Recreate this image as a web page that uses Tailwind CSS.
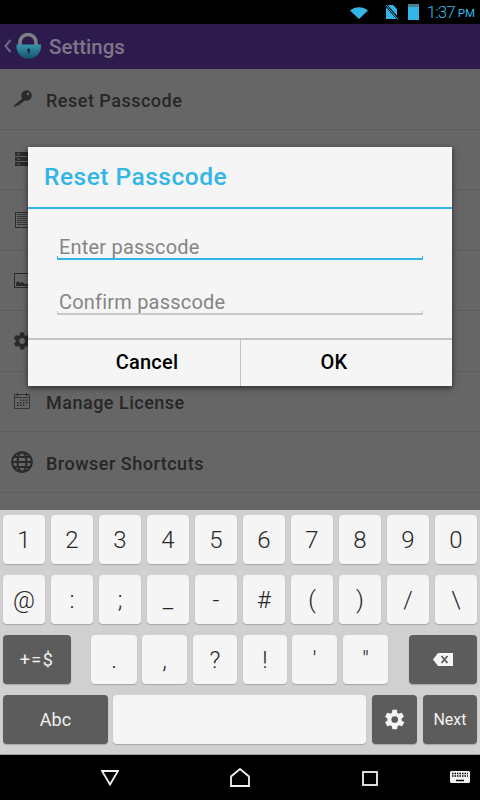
<!DOCTYPE html>
<html lang="en">
<head>
<meta charset="UTF-8">
<title>Reset Passcode</title>
<script src="https://cdn.jsdelivr.net/npm/@tailwindcss/browser@4"></script>
</head>
<body class="w-[480px] h-[800px] overflow-hidden bg-black font-['Roboto',sans-serif]">
<div class="flex flex-col h-[800px]">

  <!-- status bar -->
  <div class="h-[24px] bg-black flex items-center justify-end text-[#33b5e5]">
    <svg class="w-[18px] h-[12px] mr-[17px] mt-[1px]" viewBox="0 0 18 12"><path d="M0 3.500C5 -1 13 -1 18 3.500L9 12Z" fill="#33b5e5"/></svg>
    <svg class="w-[14px] h-[16px] mr-[9px]" viewBox="0 0 14 16"><path d="M1 1H8L12 5V15H1Z" fill="#33b5e5"/><path d="M0 0L14 16" stroke="#000" stroke-width="2.500"/><path d="M1 1L13 15.500" stroke="#33b5e5" stroke-width="1"/></svg>
    <svg class="w-[11px] h-[16px] mr-[8px]" viewBox="0 0 11 16"><rect x="0" y="0" width="11" height="3" fill="#4a7f96"/><rect x="0" y="3" width="11" height="13" fill="#33b5e5"/></svg>
    <span class="text-[17px] font-light leading-none mr-[3px] tracking-[-1px]">1:37</span>
    <span class="text-[11.500px] leading-none mr-[5px] mt-[3px]">PM</span>
  </div>

  <!-- app bar -->
  <div class="h-[45px] bg-[#2d1b4e] flex items-center">
    <svg class="w-[8px] h-[14px] ml-[4px] mt-[-2px]" viewBox="0 0 8 14"><path d="M6.500 1L1.500 7L6.500 13" fill="none" stroke="#6f6787" stroke-width="2"/></svg>
    <svg class="w-[26px] h-[26px] ml-[4px] mt-[-1px]" viewBox="0 0 26 26">
      <defs><linearGradient id="lock" x1="0" y1="0" x2="0" y2="1"><stop offset="0" stop-color="#3b93ad"/><stop offset="1" stop-color="#14566f"/></linearGradient></defs>
      <path d="M4 12V9.500a8 8 0 0 1 16 0V12" fill="none" stroke="#7d8186" stroke-width="3.500"/>
      <path d="M0.500 11.500H25V14a12.250 11.500 0 0 1-24.500 0Z" fill="url(#lock)"/>
      <circle cx="12.700" cy="17" r="1.500" fill="#10232c"/><rect x="12" y="17" width="1.400" height="3.500" fill="#10232c"/>
    </svg>
    <span class="ml-[7px] mt-[2px] text-[20.500px] font-medium text-[#7f7689]">Settings</span>
  </div>

  <!-- settings list, dimmed behind the dialog -->
  <div class="relative h-[441px] bg-[#666666]">
    <div class="flex items-center h-[60.500px] border-b border-[#5d5d5d]">
      <div class="w-[46px] flex justify-center pr-[2px]">
        <svg class="w-[19px] h-[17px]" viewBox="0 0 19 17"><circle cx="13.500" cy="5.500" r="5.200" fill="#2a2a2a"/><circle cx="15" cy="4" r="1.300" fill="#666"/><path d="M10 8L1 15.500L2 17L5 15L6 15.500L8 13L9 13L12 10Z" fill="#2a2a2a"/></svg>
      </div>
      <span class="mt-[3px] text-[18px] tracking-[0.5px] font-medium text-[#262626]">Reset Passcode</span>
    </div>
    <div class="flex items-center h-[60.500px] border-b border-[#5d5d5d]">
      <div class="w-[46px] flex justify-center pr-[2px]">
        <svg class="w-[15px] h-[14px]" viewBox="0 0 15 14"><path d="M0 0H15V4H0ZM0 5H15V9H0ZM0 10H15V14H0Z" fill="#2a2a2a"/><path d="M2 2H5M2 7H5M2 12H5" stroke="#666"/></svg>
      </div>
    </div>
    <div class="flex items-center h-[60.500px] border-b border-[#5d5d5d]">
      <div class="w-[46px] flex justify-center pr-[2px]">
        <svg class="w-[14px] h-[16px]" viewBox="0 0 14 16"><rect x="0.500" y="0.500" width="13" height="15" fill="none" stroke="#2a2a2a"/><path d="M2 2.500H12M2 4.500H12M2 6.500H12M2 8.500H12M2 10.500H12M2 12.500H12" stroke="#2a2a2a" stroke-width="0.800"/></svg>
      </div>
    </div>
    <div class="flex items-center h-[60.500px] border-b border-[#5d5d5d]">
      <div class="w-[46px] flex justify-center pr-[2px]">
        <svg class="w-[16px] h-[15px]" viewBox="0 0 16 15"><rect x="0.500" y="0.500" width="15" height="14" fill="none" stroke="#2a2a2a"/><path d="M2 13V10L4 8L6 10L8 9L11 11L14 11V13Z" fill="#2a2a2a"/></svg>
      </div>
    </div>
    <div class="flex items-center h-[60.500px] border-b border-[#5d5d5d]">
      <div class="w-[46px] flex justify-center pr-[2px]">
        <svg class="w-[20px] h-[20px]" viewBox="0 0 24 24"><path fill="#2a2a2a" d="M19.400 13c.040-.330.060-.660.060-1s-.020-.670-.060-1l2.150-1.680c.190-.150.240-.420.120-.640l-2.040-3.530c-.120-.220-.390-.300-.620-.220l-2.540 1.020c-.530-.400-1.100-.730-1.720-.990L14.770 2.260c-.040-.240-.250-.420-.500-.420h-4.080c-.250 0-.460.180-.500.420L9.310 4.960c-.620.260-1.190.600-1.720.990L5.050 4.930c-.230-.090-.500 0-.620.220L2.390 8.680c-.130.220-.070.490.120.640L4.660 11c-.040.330-.070.670-.070 1s.030.670.070 1l-2.150 1.680c-.190.150-.250.420-.120.640l2.040 3.530c.120.220.390.300.620.220l2.540-1.020c.530.400 1.100.730 1.720.990l.380 2.700c.040.240.250.420.500.420h4.080c.250 0 .460-.180.500-.420l.380-2.700c.620-.260 1.190-.600 1.720-.990l2.540 1.020c.230.090.500 0 .620-.220l2.040-3.530c.120-.220.070-.490-.120-.640ZM12.230 15.500a3.500 3.500 0 1 1 0-7 3.500 3.500 0 0 1 0 7Z"/></svg>
      </div>
    </div>
    <div class="flex items-center h-[60.500px] border-b border-[#5d5d5d]">
      <div class="w-[46px] flex justify-center pr-[2px]">
        <svg class="w-[16px] h-[16px]" viewBox="0 0 16 16"><path d="M.5 1.500H15.500V15.500H.5Z" fill="none" stroke="#2a2a2a" stroke-width="0.800"/><path d="M3.500 0V3M12.500 0V3" stroke="#2a2a2a" stroke-width="1.200"/><path d="M1 4.500H15" stroke="#2a2a2a" stroke-width="0.800"/><path d="M6 6.500H7.500V8H6ZM9 6.500H10.500V8H9ZM12 6.500H13.500V8H12ZM3 9H4.500V10.500H3ZM6 9H7.500V10.500H6ZM9 9H10.500V10.500H9ZM12 9H13.500V10.500H12ZM3 11.500H4.500V13H3ZM6 11.500H7.500V13H6ZM9 11.500H10.500V13H9Z" fill="#2a2a2a"/></svg>
      </div>
      <span class="mt-[3px] text-[18px] tracking-[0.5px] font-medium text-[#262626]">Manage License</span>
    </div>
    <div class="flex items-center h-[60.500px] border-b border-[#5d5d5d]">
      <div class="w-[46px] flex justify-center pr-[2px]">
        <svg class="w-[22px] h-[22px]" viewBox="0 0 22 22"><g fill="none" stroke="#2a2a2a" stroke-width="2"><circle cx="11" cy="11" r="9.800"/><ellipse cx="11" cy="11" rx="4.500" ry="9.800"/><path d="M1 11H21M2.500 6H19.500M2.500 16H19.500"/></g></svg>
      </div>
      <span class="mt-[3px] text-[18px] tracking-[0.5px] font-medium text-[#262626]">Browser Shortcuts</span>
    </div>

    <!-- dialog -->
    <div class="absolute left-[28px] top-[78px] w-[424px] h-[239px] bg-[#f5f5f5] flex flex-col shadow-[0_2px_6px_rgba(0,0,0,0.6)]">
      <div class="h-[62px] shrink-0 border-b-2 border-[#33b5e5] flex items-center pl-[16px] text-[24.500px] tracking-[0.5px] font-medium text-[#33b5e5]">Reset Passcode</div>
      <div class="flex-1 px-[29px] pt-[25px]">
        <div class="h-[22px] pl-[2px] text-[20px] leading-[26px] text-[#858585] tracking-[0.2px]">Enter passcode</div>
        <div class="h-[4px] border-x border-b-2 border-[#33b5e5]"></div>
        <div class="h-[22px] pl-[2px] mt-[29px] text-[20px] leading-[26px] text-[#858585] tracking-[0.2px]">Confirm passcode</div>
        <div class="h-[4px] border-x border-b-2 border-[#c8c8c8]"></div>
      </div>
      <div class="h-[48px] shrink-0 border-t-2 border-[#c4c4c4] flex text-[20px] tracking-[0.2px] font-medium text-black">
        <div class="flex-1 flex items-center justify-center pl-[26px] pb-[2px] border-r border-[#c4c4c4]">Cancel</div>
        <div class="flex-1 flex items-center justify-center pr-[25px] pb-[2px]">OK</div>
      </div>
    </div>
  </div>

  <!-- keyboard -->
  <div class="h-[244px] bg-[#d0d0d0] pt-[5px] px-[3px] flex flex-col gap-[11px] text-[#262626]">
    <div class="flex justify-between h-[49px] text-[24px] font-light">
      <div class="w-[42px] rounded-[4px] bg-[#f5f5f5] shadow-[0_1px_1px_#a5a5a5] flex items-center justify-center">1</div>
      <div class="w-[42px] rounded-[4px] bg-[#f5f5f5] shadow-[0_1px_1px_#a5a5a5] flex items-center justify-center">2</div>
      <div class="w-[42px] rounded-[4px] bg-[#f5f5f5] shadow-[0_1px_1px_#a5a5a5] flex items-center justify-center">3</div>
      <div class="w-[42px] rounded-[4px] bg-[#f5f5f5] shadow-[0_1px_1px_#a5a5a5] flex items-center justify-center">4</div>
      <div class="w-[42px] rounded-[4px] bg-[#f5f5f5] shadow-[0_1px_1px_#a5a5a5] flex items-center justify-center">5</div>
      <div class="w-[42px] rounded-[4px] bg-[#f5f5f5] shadow-[0_1px_1px_#a5a5a5] flex items-center justify-center">6</div>
      <div class="w-[42px] rounded-[4px] bg-[#f5f5f5] shadow-[0_1px_1px_#a5a5a5] flex items-center justify-center">7</div>
      <div class="w-[42px] rounded-[4px] bg-[#f5f5f5] shadow-[0_1px_1px_#a5a5a5] flex items-center justify-center">8</div>
      <div class="w-[42px] rounded-[4px] bg-[#f5f5f5] shadow-[0_1px_1px_#a5a5a5] flex items-center justify-center">9</div>
      <div class="w-[42px] rounded-[4px] bg-[#f5f5f5] shadow-[0_1px_1px_#a5a5a5] flex items-center justify-center">0</div>
    </div>
    <div class="flex justify-between h-[49px] text-[24px] font-light">
      <div class="w-[42px] rounded-[4px] bg-[#f5f5f5] shadow-[0_1px_1px_#a5a5a5] flex items-center justify-center">@</div>
      <div class="w-[42px] rounded-[4px] bg-[#f5f5f5] shadow-[0_1px_1px_#a5a5a5] flex items-center justify-center">:</div>
      <div class="w-[42px] rounded-[4px] bg-[#f5f5f5] shadow-[0_1px_1px_#a5a5a5] flex items-center justify-center">;</div>
      <div class="w-[42px] rounded-[4px] bg-[#f5f5f5] shadow-[0_1px_1px_#a5a5a5] flex items-center justify-center">_</div>
      <div class="w-[42px] rounded-[4px] bg-[#f5f5f5] shadow-[0_1px_1px_#a5a5a5] flex items-center justify-center">-</div>
      <div class="w-[42px] rounded-[4px] bg-[#f5f5f5] shadow-[0_1px_1px_#a5a5a5] flex items-center justify-center">#</div>
      <div class="w-[42px] rounded-[4px] bg-[#f5f5f5] shadow-[0_1px_1px_#a5a5a5] flex items-center justify-center">(</div>
      <div class="w-[42px] rounded-[4px] bg-[#f5f5f5] shadow-[0_1px_1px_#a5a5a5] flex items-center justify-center">)</div>
      <div class="w-[42px] rounded-[4px] bg-[#f5f5f5] shadow-[0_1px_1px_#a5a5a5] flex items-center justify-center">/</div>
      <div class="w-[42px] rounded-[4px] bg-[#f5f5f5] shadow-[0_1px_1px_#a5a5a5] flex items-center justify-center">\</div>
    </div>
    <div class="flex h-[49px] text-[24px] font-light">
      <div class="w-[68px] rounded-[4px] bg-[#5c5c5c] shadow-[0_1px_1px_#a5a5a5] flex items-center justify-center text-[18px] font-normal text-[#f0f0f0] tracking-[1.500px]">+=$</div>
      <div class="w-[46px] ml-[20px] rounded-[4px] bg-[#f5f5f5] shadow-[0_1px_1px_#a5a5a5] flex items-center justify-center">.</div>
      <div class="w-[45px] ml-[5px] rounded-[4px] bg-[#f5f5f5] shadow-[0_1px_1px_#a5a5a5] flex items-center justify-center">,</div>
      <div class="w-[44px] ml-[6px] rounded-[4px] bg-[#f5f5f5] shadow-[0_1px_1px_#a5a5a5] flex items-center justify-center">?</div>
      <div class="w-[44px] ml-[6px] rounded-[4px] bg-[#f5f5f5] shadow-[0_1px_1px_#a5a5a5] flex items-center justify-center">!</div>
      <div class="w-[45px] ml-[5px] rounded-[4px] bg-[#f5f5f5] shadow-[0_1px_1px_#a5a5a5] flex items-center justify-center">'</div>
      <div class="w-[45px] ml-[6px] rounded-[4px] bg-[#f5f5f5] shadow-[0_1px_1px_#a5a5a5] flex items-center justify-center">"</div>
      <div class="w-[68px] ml-[21px] rounded-[4px] bg-[#5c5c5c] shadow-[0_1px_1px_#a5a5a5] flex items-center justify-center">
        <svg class="w-[20px] h-[13px]" viewBox="0 0 20 13"><path d="M5 0H20V13H5L0 6.500Z" fill="#f5f5f5"/><path d="M8.500 3L14.500 10M14.500 3L8.500 10" stroke="#5c5c5c" stroke-width="1.800"/></svg>
      </div>
    </div>
    <div class="flex h-[49px] text-[18px] text-[#f0f0f0]">
      <div class="w-[105px] rounded-[4px] bg-[#5c5c5c] shadow-[0_1px_1px_#a5a5a5] flex items-center justify-center">Abc</div>
      <div class="w-[253px] ml-[5px] rounded-[4px] bg-[#f5f5f5] shadow-[0_1px_1px_#a5a5a5]"></div>
      <div class="w-[45px] ml-[6px] rounded-[4px] bg-[#5c5c5c] shadow-[0_1px_1px_#a5a5a5] flex items-center justify-center">
        <svg class="w-[23px] h-[23px]" viewBox="0 0 24 24"><path fill="#f5f5f5" d="M19.400 13c.040-.330.060-.660.060-1s-.020-.670-.060-1l2.150-1.680c.190-.150.240-.420.120-.640l-2.040-3.530c-.120-.220-.390-.300-.620-.220l-2.540 1.020c-.530-.400-1.100-.730-1.720-.990L14.770 2.260c-.040-.240-.250-.420-.500-.420h-4.080c-.250 0-.460.180-.500.420L9.310 4.960c-.620.260-1.190.600-1.720.990L5.050 4.930c-.230-.090-.500 0-.620.220L2.390 8.680c-.130.220-.070.490.120.640L4.660 11c-.040.330-.070.670-.070 1s.030.670.070 1l-2.150 1.680c-.190.150-.250.420-.120.640l2.040 3.530c.120.220.390.300.62.220l2.540-1.020c.530.400 1.100.730 1.720.990l.380 2.700c.040.240.250.420.500.420h4.080c.250 0 .460-.180.500-.420l.380-2.700c.620-.260 1.190-.600 1.720-.990l2.540 1.020c.230.090.500 0 .620-.220l2.040-3.530c.120-.220.070-.490-.120-.640ZM12.230 15.500a3.500 3.500 0 1 1 0-7 3.500 3.500 0 0 1 0 7Z"/></svg>
      </div>
      <div class="w-[54px] ml-[6px] rounded-[4px] bg-[#5c5c5c] shadow-[0_1px_1px_#a5a5a5] flex items-center justify-center text-[16px]">Next</div>
    </div>
  </div>

  <!-- nav bar -->
  <div class="h-[46px] bg-black border-t border-[#a0a0a0] flex items-center relative">
    <svg class="ml-[101px] w-[18px] h-[16px]" viewBox="0 0 18 16"><path d="M1 1H17L9 14.500Z" fill="none" stroke="#f2f2f2" stroke-width="1.800"/></svg>
    <svg class="ml-[111px] w-[20px] h-[19px]" viewBox="0 0 20 19"><path d="M1 18V8.500L10 1L19 8.500V18Z" fill="none" stroke="#f2f2f2" stroke-width="1.800"/></svg>
    <svg class="ml-[112px] w-[16px] h-[15px] mt-[2px]" viewBox="0 0 16 15"><rect x="1" y="1" width="14" height="13" fill="none" stroke="#f2f2f2" stroke-width="1.800"/></svg>
    <svg class="ml-[72px] w-[20px] h-[13px]" viewBox="0 0 20 13"><path d="M1 0H19L20 1V11L19 12H1L0 11V1Z" fill="#f2f2f2"/><path d="M2 2.500H18M2 5H18" stroke="#000" stroke-width="1.300" stroke-dasharray="1.500 1"/><path d="M6 9.500H14" stroke="#000" stroke-width="1.500"/></svg>
  </div>
</div>
</body>
</html>
